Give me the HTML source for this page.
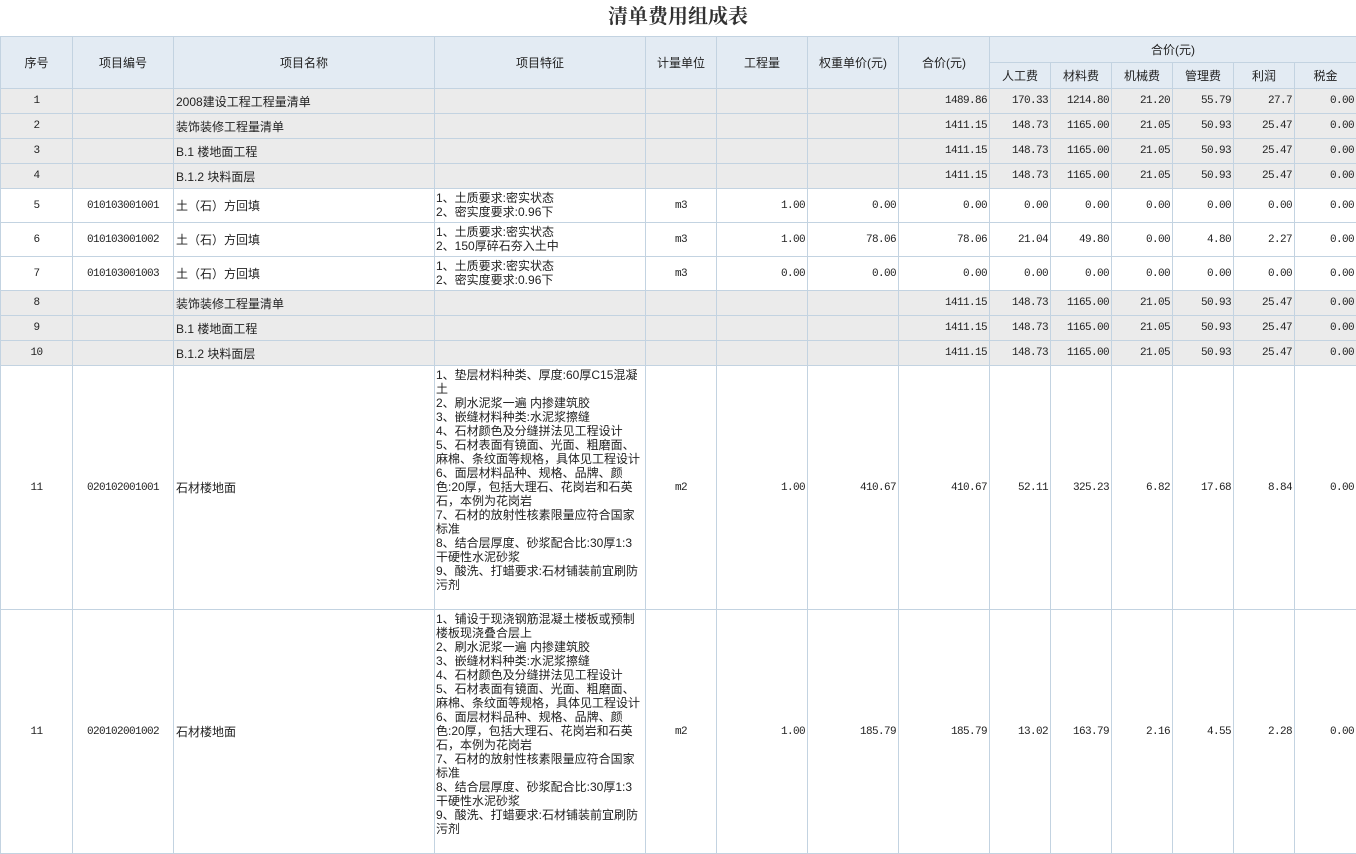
<!DOCTYPE html>
<html><head><meta charset="utf-8"><style>
body{margin:0;background:#fff;width:1356px;height:854px;overflow:hidden;font-family:"Liberation Sans","Noto Sans CJK SC",sans-serif;font-size:12px;color:#222}
h1{margin:0;height:36px;line-height:30px;text-align:center;font-size:20px;font-weight:bold;font-family:"Noto Serif CJK SC","Noto Sans CJK SC",serif;color:#333}
table{position:absolute;left:0;top:36px;border-collapse:collapse;table-layout:fixed;width:1356px}
td,th{border:1px solid #c3d3e1;padding:0 2px;overflow:hidden;white-space:nowrap;font-weight:normal}
th{background:#e3ebf3;height:25px}
tr.g td{background:#ebebeb}
.c{text-align:center}.r{text-align:right;padding-right:2px}
.n{font-family:"Liberation Mono",monospace;font-size:11px;letter-spacing:-0.6px}
.f{vertical-align:top;line-height:14px;padding:2px 1px;white-space:nowrap}
</style></head><body>
<h1>清单费用组成表</h1>
<table>
<colgroup><col style="width:72px"><col style="width:101px"><col style="width:261px"><col style="width:211px"><col style="width:71px"><col style="width:91px"><col style="width:91px"><col style="width:91px"><col style="width:61px"><col style="width:61px"><col style="width:61px"><col style="width:61px"><col style="width:61px"><col style="width:62px"></colgroup>
<tr><th rowspan="2">序号</th><th rowspan="2">项目编号</th><th rowspan="2">项目名称</th><th rowspan="2">项目特征</th><th rowspan="2">计量单位</th><th rowspan="2">工程量</th><th rowspan="2">权重单价(元)</th><th rowspan="2">合价(元)</th><th colspan="6">合价(元)</th></tr>
<tr><th>人工费</th><th>材料费</th><th>机械费</th><th>管理费</th><th>利润</th><th>税金</th></tr>
<tr class="g" style="height:25px"><td class="c n">1</td><td></td><td>2008建设工程工程量清单</td><td></td><td></td><td></td><td></td><td class="r n">1489.86</td><td class="r n">170.33</td><td class="r n">1214.80</td><td class="r n">21.20</td><td class="r n">55.79</td><td class="r n">27.7</td><td class="r n">0.00</td></tr>
<tr class="g" style="height:25px"><td class="c n">2</td><td></td><td>装饰装修工程量清单</td><td></td><td></td><td></td><td></td><td class="r n">1411.15</td><td class="r n">148.73</td><td class="r n">1165.00</td><td class="r n">21.05</td><td class="r n">50.93</td><td class="r n">25.47</td><td class="r n">0.00</td></tr>
<tr class="g" style="height:25px"><td class="c n">3</td><td></td><td>B.1 楼地面工程</td><td></td><td></td><td></td><td></td><td class="r n">1411.15</td><td class="r n">148.73</td><td class="r n">1165.00</td><td class="r n">21.05</td><td class="r n">50.93</td><td class="r n">25.47</td><td class="r n">0.00</td></tr>
<tr class="g" style="height:25px"><td class="c n">4</td><td></td><td>B.1.2 块料面层</td><td></td><td></td><td></td><td></td><td class="r n">1411.15</td><td class="r n">148.73</td><td class="r n">1165.00</td><td class="r n">21.05</td><td class="r n">50.93</td><td class="r n">25.47</td><td class="r n">0.00</td></tr>
<tr style="height:34px"><td class="c n">5</td><td class="c n">010103001001</td><td>土（石）方回填</td><td class="f">1、土质要求:密实状态<br>2、密实度要求:0.96下</td><td class="c n">m3</td><td class="r n">1.00</td><td class="r n">0.00</td><td class="r n">0.00</td><td class="r n">0.00</td><td class="r n">0.00</td><td class="r n">0.00</td><td class="r n">0.00</td><td class="r n">0.00</td><td class="r n">0.00</td></tr>
<tr style="height:34px"><td class="c n">6</td><td class="c n">010103001002</td><td>土（石）方回填</td><td class="f">1、土质要求:密实状态<br>2、150厚碎石夯入土中</td><td class="c n">m3</td><td class="r n">1.00</td><td class="r n">78.06</td><td class="r n">78.06</td><td class="r n">21.04</td><td class="r n">49.80</td><td class="r n">0.00</td><td class="r n">4.80</td><td class="r n">2.27</td><td class="r n">0.00</td></tr>
<tr style="height:34px"><td class="c n">7</td><td class="c n">010103001003</td><td>土（石）方回填</td><td class="f">1、土质要求:密实状态<br>2、密实度要求:0.96下</td><td class="c n">m3</td><td class="r n">0.00</td><td class="r n">0.00</td><td class="r n">0.00</td><td class="r n">0.00</td><td class="r n">0.00</td><td class="r n">0.00</td><td class="r n">0.00</td><td class="r n">0.00</td><td class="r n">0.00</td></tr>
<tr class="g" style="height:25px"><td class="c n">8</td><td></td><td>装饰装修工程量清单</td><td></td><td></td><td></td><td></td><td class="r n">1411.15</td><td class="r n">148.73</td><td class="r n">1165.00</td><td class="r n">21.05</td><td class="r n">50.93</td><td class="r n">25.47</td><td class="r n">0.00</td></tr>
<tr class="g" style="height:25px"><td class="c n">9</td><td></td><td>B.1 楼地面工程</td><td></td><td></td><td></td><td></td><td class="r n">1411.15</td><td class="r n">148.73</td><td class="r n">1165.00</td><td class="r n">21.05</td><td class="r n">50.93</td><td class="r n">25.47</td><td class="r n">0.00</td></tr>
<tr class="g" style="height:25px"><td class="c n">10</td><td></td><td>B.1.2 块料面层</td><td></td><td></td><td></td><td></td><td class="r n">1411.15</td><td class="r n">148.73</td><td class="r n">1165.00</td><td class="r n">21.05</td><td class="r n">50.93</td><td class="r n">25.47</td><td class="r n">0.00</td></tr>
<tr style="height:244px"><td class="c n">11</td><td class="c n">020102001001</td><td>石材楼地面</td><td class="f">1、垫层材料种类、厚度:60厚C15混凝<br>土<br>2、刷水泥浆一遍 内掺建筑胶<br>3、嵌缝材料种类:水泥浆擦缝<br>4、石材颜色及分缝拼法见工程设计<br>5、石材表面有镜面、光面、粗磨面、<br>麻棉、条纹面等规格，具体见工程设计<br>6、面层材料品种、规格、品牌、颜<br>色:20厚，包括大理石、花岗岩和石英<br>石，本例为花岗岩<br>7、石材的放射性核素限量应符合国家<br>标准<br>8、结合层厚度、砂浆配合比:30厚1:3<br>干硬性水泥砂浆<br>9、酸洗、打蜡要求:石材铺装前宜刷防<br>污剂</td><td class="c n">m2</td><td class="r n">1.00</td><td class="r n">410.67</td><td class="r n">410.67</td><td class="r n">52.11</td><td class="r n">325.23</td><td class="r n">6.82</td><td class="r n">17.68</td><td class="r n">8.84</td><td class="r n">0.00</td></tr>
<tr style="height:244px"><td class="c n">11</td><td class="c n">020102001002</td><td>石材楼地面</td><td class="f">1、铺设于现浇钢筋混凝土楼板或预制<br>楼板现浇叠合层上<br>2、刷水泥浆一遍 内掺建筑胶<br>3、嵌缝材料种类:水泥浆擦缝<br>4、石材颜色及分缝拼法见工程设计<br>5、石材表面有镜面、光面、粗磨面、<br>麻棉、条纹面等规格，具体见工程设计<br>6、面层材料品种、规格、品牌、颜<br>色:20厚，包括大理石、花岗岩和石英<br>石，本例为花岗岩<br>7、石材的放射性核素限量应符合国家<br>标准<br>8、结合层厚度、砂浆配合比:30厚1:3<br>干硬性水泥砂浆<br>9、酸洗、打蜡要求:石材铺装前宜刷防<br>污剂</td><td class="c n">m2</td><td class="r n">1.00</td><td class="r n">185.79</td><td class="r n">185.79</td><td class="r n">13.02</td><td class="r n">163.79</td><td class="r n">2.16</td><td class="r n">4.55</td><td class="r n">2.28</td><td class="r n">0.00</td></tr>
</table>
</body></html>
